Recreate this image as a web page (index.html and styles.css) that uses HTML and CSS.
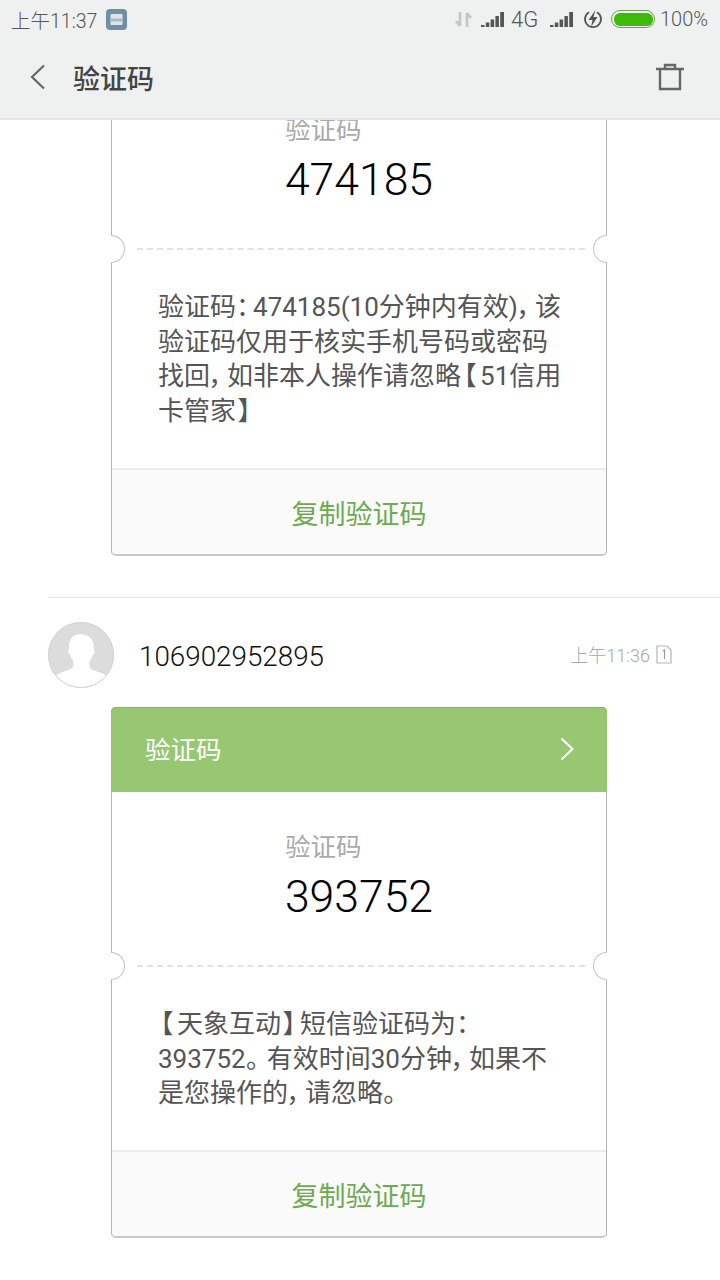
FILE: index.html
```html
<!DOCTYPE html>
<html lang="zh">
<head>
<meta charset="utf-8">
<title>验证码</title>
<link rel="stylesheet" href="styles.css">
</head>
<body>
<div class="phone">
  <header class="top">
    <div class="status">
      <span class="clock">上午11:37</span>
      <svg class="note" viewBox="0 0 21 21"><rect width="21" height="21" rx="4" fill="#6f8fa6"/><rect x="4.500" y="5" width="12" height="11" rx="1" fill="#dfe5e8"/><rect x="4.500" y="9.500" width="12" height="3" fill="#a9bac5"/></svg>
      <span class="spacer"></span>
      <svg class="arrows" viewBox="0 0 17 17"><path d="M5 1v14M5 15l-4-5M12 16V2M12 2l4 5" fill="none" stroke="#c4c6c6" stroke-width="2.600"/></svg>
      <svg class="signal" viewBox="0 0 23 15"><path d="M0 13h3.500v2H0zM4.800 10.500h3.500V15H4.800zM9.600 7.500h3.500V15H9.600zM14.400 4h3.500v11h-3.500zM19.200 0h3.800v15h-3.800z" fill="#555"/></svg>
      <span class="net">4G</span>
      <svg class="signal s2" viewBox="0 0 23 15"><path d="M0 13h3.500v2H0zM4.800 10.500h3.500V15H4.800zM9.600 7.500h3.500V15H9.600zM14.400 4h3.500v11h-3.500zM19.200 0h3.800v15h-3.800z" fill="#555"/></svg>
      <svg class="bolt" viewBox="0 0 20 20"><path d="M6 3.200a8 8 0 1 0 8 0" fill="none" stroke="#555" stroke-width="1.800"/><path d="M12.500 1 5.500 11h4L8 18l6.500-10h-4z" fill="#555"/></svg>
      <span class="battery"><span class="charge"></span></span>
      <span class="pct">100%</span>
    </div>
    <div class="bar">
      <svg class="back" viewBox="0 0 16 26"><path d="M14 1.500 2 13l12 11.500" fill="none" stroke="#666" stroke-width="2.200"/></svg>
      <h1 class="title">验证码</h1>
      <svg class="trash" viewBox="0 0 30 28"><path d="M1 6h28M10 6V2h10v4M5 6v20h20V6" fill="none" stroke="#666" stroke-width="2.400"/></svg>
    </div>
  </header>
  <main class="list">
    <section class="msg first">
      <article class="card">
        <div class="code">
          <div class="code-in"><span class="label">验证码</span><span class="num">474185</span></div>
        </div>
        <div class="divider"><i class="nl"></i><i class="nr"></i></div>
        <p class="text">验证码<span class="pu">：</span>474185(10分钟内有效)<span class="pu">，</span>该<br>验证码仅用于核实手机号码或密码<br>找回<span class="pu">，</span>如非本人操作请忽略<span class="br">【</span>51信用<br>卡管家<span class="br">】</span></p>
        <div class="copy">复制验证码</div>
      </article>
    </section>
    <section class="msg">
      <div class="rule"></div>
      <div class="who">
        <svg class="avatar" viewBox="0 0 66 66"><defs><clipPath id="c"><circle cx="33" cy="33" r="32.500"/></clipPath></defs><circle cx="33" cy="33" r="33" fill="#dcdcdc"/><path clip-path="url(#c)" d="M33 12c-8 0-12.500 5.500-12 14 .2 2-1.200 2.500-.6 4.500.4 1.300 1.500 1.500 2 3 .6 2.500 1.800 4 3 5.500v5c-.5 3-6 4.500-12 6.500-4 1.500-6 3-8 5v11h56V56c-2-2-4-3.500-8-5-6-2-11.500-3.500-12-6.500v-5c1.200-1.500 2.400-3 3-5.500.5-1.500 1.600-1.700 2-3 .6-2-.8-2.500-.6-4.500.5-8.500-4-14-12-14z" fill="#fff"/><circle cx="33" cy="33" r="32.500" fill="none" stroke="#d4d4d4"/></svg>
        <span class="name">106902952895</span>
        <span class="time">上午11:36</span>
        <svg class="sim" viewBox="0 0 16 19"><path d="M1 1h10l4 4v13H1z" fill="none" stroke="#b5b5b5" stroke-width="1.200"/><path d="M6.500 6 8.500 5v9" fill="none" stroke="#999" stroke-width="1.200"/></svg>
      </div>
      <article class="card">
        <div class="head"><span>验证码</span><svg class="go" viewBox="0 0 14 24"><path d="M1.500 1.500 12.500 12 1.500 22.500" fill="none" stroke="#fff" stroke-width="2.200"/></svg></div>
        <div class="code">
          <div class="code-in"><span class="label">验证码</span><span class="num">393752</span></div>
        </div>
        <div class="divider"><i class="nl"></i><i class="nr"></i></div>
        <p class="text"><span class="br">【</span>天象互动<span class="br">】</span>短信验证码为<span class="pu">：</span><br>393752<span class="st">。</span>有效时间30分钟<span class="pu">，</span>如果不<br>是您操作的<span class="pu">，</span>请忽略<span class="st">。</span></p>
        <div class="copy">复制验证码</div>
      </article>
    </section>
    <div class="rule"></div>
  </main>
</div>
</body>
</html>
```
FILE: styles.css
```css
* { box-sizing: border-box; }
html, body { margin: 0; padding: 0; background: #fff; }
body { font-family: Roboto, "Noto Sans CJK SC", sans-serif; }
.phone { width: 720px; height: 1280px; overflow: hidden; display: flex; flex-direction: column; }

.top { height: 120px; flex: none; background: #eff1f1; border-bottom: 2px solid #e6e8e8; position: relative; z-index: 2; }
.status { height: 38px; display: flex; align-items: center; padding: 0 11px; color: #555; font-size: 20px; font-weight: 300; }
.clock { width: 85px; font-size: 19.500px; white-space: nowrap; }
.note { width: 21px; height: 21px; margin-left: 10px; }
.spacer { flex: 1; }
.arrows { width: 17px; height: 17px; }
.signal { width: 23px; height: 15px; margin-left: 9px; }
.net { margin-left: 7px; width: 28px; font-size: 22px; white-space: nowrap; }
.s2 { margin-left: 11px; }
.bolt { width: 20px; height: 20px; margin-left: 10px; }
.battery { width: 44px; height: 18px; margin-left: 8px; border: 1.500px solid #6aa55a; border-radius: 9px; padding: 1.500px; display: flex; }
.charge { flex: 1; background: #3fba0a; border-radius: 6px; }
.pct { margin-left: 5px; width: 49px; white-space: nowrap; }

.bar { height: 80px; display: flex; align-items: center; padding: 0 35px 2px 30px; }
.back { width: 16px; height: 26px; }
.title { margin: 0 0 0 27px; font-size: 27px; font-weight: 500; color: #444; flex: 1; }
.trash { width: 30px; height: 28px; }

.list { flex: 1; overflow: hidden; }
.msg { padding-bottom: 41px; }
.msg + .msg { padding-bottom: 42px; }
.first { margin-top: -46px; }
.rule { height: 1px; margin-left: 48px; background: #e6e6e6; }
.who { height: 109px; padding: 24px 48px 19px; display: flex; align-items: center; }
.avatar { width: 66px; height: 66px; flex: none; }
.name { margin-left: 25px; padding-top: 3px; font-size: 27.800px; font-weight: 300; color: #111; flex: 1; }
.time { font-size: 18px; font-weight: 300; color: #a8a8a8; white-space: nowrap; margin-top: -2px; }
.sim { width: 16px; height: 19px; margin-left: 6px; }

.card { width: 496px; margin-left: 111px; border: 1px solid #b5b5b5; border-bottom: 2px solid #c8c8c8; border-radius: 5px; }
.head { height: 85px; margin: -1px -1px 0; background: #97c770; box-shadow: inset 0 1px #8bb368; border-radius: 5px 5px 0 0; color: #fff; font-size: 25.500px; display: flex; align-items: center; justify-content: space-between; padding: 0 33px 3px 34px; }
.go { width: 14px; height: 24px; margin-top: 3px; }
.code { height: 173px; display: flex; justify-content: center; }
.code-in { display: inline-flex; flex-direction: column; align-items: flex-start; padding-top: 35px; }
.label { font-size: 25.500px; line-height: 40px; color: #aaa; }
.num { font-size: 44.500px; font-weight: 300; line-height: 60px; color: #000; }

.divider { height: 1px; margin: 0 21px 0 25px; border-top: 2px dashed #e2e2e2; position: relative; }
.nl, .nr { position: absolute; top: -15px; width: 14px; height: 28px; background: #fff; border: 1px solid #c4c4c4; }
.nl { left: -26px; border-left: 0; border-radius: 0 14px 14px 0; }
.nr { right: -22px; border-right: 0; border-radius: 14px 0 0 14px; }

.text { margin: 0; padding: 40px 40px 39px 46px; font-size: 26px; line-height: 34.700px; color: #555; white-space: nowrap; font-feature-settings: "palt"; }
.pu { margin-right: 4px; }
.br { margin: 0 4px 0 2px; }
.st { margin-right: 8px; }
.copy { height: 86px; padding-top: 2px; background: #fafafa; border-top: 2px solid #ececec; border-radius: 0 0 5px 5px; color: #6faa4f; font-size: 27px; display: flex; align-items: center; justify-content: center; }
```
